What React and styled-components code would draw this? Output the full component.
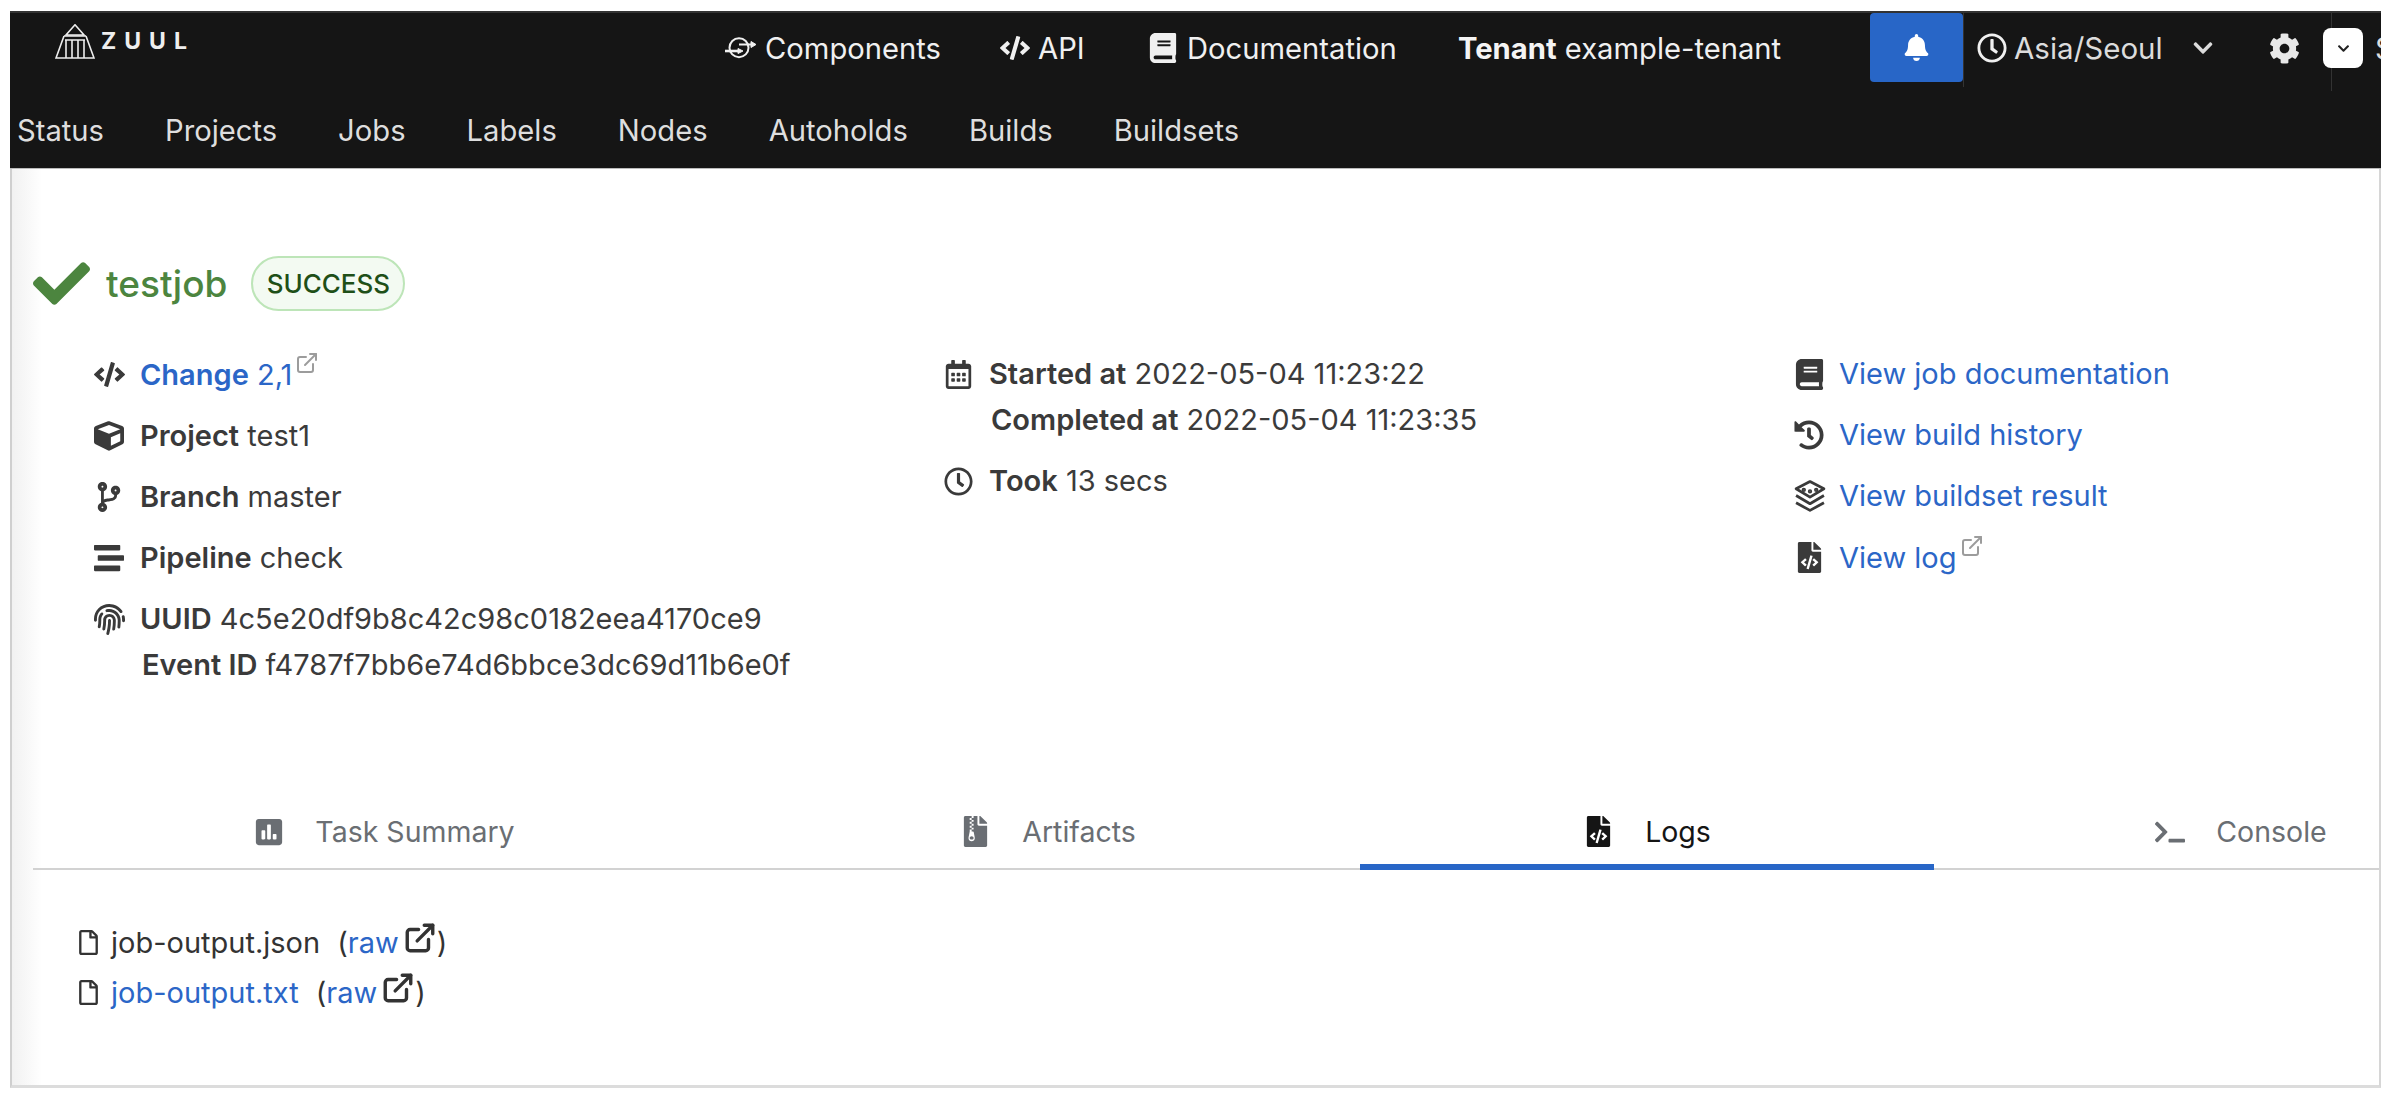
import React from "react";
import styled, { createGlobalStyle } from "styled-components";
import {
  FaBell, FaBook, FaCheck, FaChevronDown, FaCode, FaCodeBranch, FaCog, FaCube, FaFileArchive,
  FaFileCode, FaFingerprint, FaHistory, FaPoll, FaRegCalendarAlt, FaRegClock, FaRegFile, FaStream,
  FaTerminal,
} from "react-icons/fa";
import { ExternalLink } from "lucide-react";

const Global = createGlobalStyle`
  html, body { margin: 0; padding: 0; background: #fff; }
  body { font-family: Inter, "Open Sans", "Liberation Sans", sans-serif; color: #3b3b3b; overflow: hidden; }
  a { text-decoration: none; color: inherit; }
  * { box-sizing: border-box; }
`;

const Frame = styled.div`
  margin: 11px 13px 8px 10px;
  width: 2371px;
  height: 1077px;
  border-left: 2px solid #cfcfcf;
  border-right: 2px solid #d6d6d6;
  border-bottom: 3px solid #dcdcdc;
  background: linear-gradient(90deg, #f1f1f1 0, #fff 30px);
`;
const Header = styled.header`
  margin: 0 -2px;
  height: 158px;
  background: #151515;
  border-top: 2px solid #333;
  border-bottom: 1px solid #bbb;
  color: #f0f0f0;
  overflow: hidden;
  isolation: isolate;
`;
const TopRow = styled.div`
  height: 70px;
  display: flex;
  align-items: center;
  padding-left: 45px;
  white-space: nowrap;
`;
const Logo = styled.a`
  display: flex;
  align-items: flex-end;
  gap: 6px;
  width: 670px;
  height: 35px;
  margin-top: -13px;
  flex: none;
  color: #eee;
`;
const LogoText = styled.span`
  font-size: 23px;
  line-height: 34px;
  font-weight: 700;
  letter-spacing: 8px;
  height: 34px;
  margin-bottom: 1px;
`;
const TopLink = styled.a`
  display: flex;
  align-items: center;
  gap: ${(p) => p.$gap || 8}px;
  font-size: 29.2px;
  width: ${(p) => p.$w}px;
  flex: none;
  color: #f0f0f0;
  svg { flex: none; }
`;
const TenantText = styled.span`
  font-size: 29.2px;
  width: 412px;
  flex: none;
  color: #f0f0f0;
  b { font-weight: 700; color: #f4f4f4; }
`;
const BellButton = styled.button`
  width: 93px;
  height: 69px;
  flex: none;
  margin: -2px 14px 0 0;
  padding: 0;
  border: 0;
  border-radius: 4px;
  background: #2866c7;
  color: #fff;
  display: flex;
  align-items: center;
  justify-content: center;
  position: relative;
  &::after {
    content: "";
    position: absolute;
    left: 93px;
    top: -2px;
    width: 1px;
    height: 76px;
    background: #333;
  }
`;
const Zone = styled.span`
  display: flex;
  align-items: center;
  gap: 7px;
  width: 292px;
  flex: none;
  font-size: 29.5px;
  color: #dcdcdc;
  svg:first-child { color: #f0f0f0; }
`;
const ZoneChevron = styled(FaChevronDown)`
  margin-left: 22px;
`;
const Gear = styled(FaCog)`
  color: #e8e8e8;
  flex: none;
  margin-right: 23px;
`;
const UserBox = styled.span`
  position: relative;
  width: 40px;
  height: 40px;
  flex: none;
  border-radius: 8px;
  background: #fff;
  color: #222;
  display: flex;
  align-items: center;
  justify-content: center;
  &::after {
    content: "";
    position: absolute;
    left: 8px;
    top: -18px;
    width: 1px;
    height: 81px;
    background: #333;
    z-index: -1;
  }
`;
const UserName = styled.span`
  margin-left: 12px;
  font-size: 29.5px;
  color: #dcdcdc;
`;
const NavRow = styled.nav`
  height: 85px;
  padding: 10px 0 0 7px;
  display: flex;
  align-items: center;
  gap: 61px;
`;
const NavItem = styled.a`
  font-size: 29.2px;
  color: #dedede;
`;

const Title = styled.div`
  margin: 87px 0 40px 21px;
  height: 55px;
  display: flex;
  align-items: center;
  color: #4c853f;
`;
const TitleCheck = styled(FaCheck)`
  flex: none;
  margin-right: 16px;
`;
const TitleText = styled.span`
  font-size: 37px;
  font-weight: 500;
  margin-right: 24px;
`;
const Badge = styled.span`
  width: 154px;
  height: 55px;
  border-radius: 28px;
  border: 2px solid #bde5b8;
  background: #f3faf2;
  color: #1e4f18;
  font-size: 26px;
  font-weight: 500;
  display: flex;
  align-items: center;
  justify-content: center;
`;
const Details = styled.section`
  display: grid;
  grid-template-columns: 850px 850px 1fr;
  padding-left: 82px;
  height: 443px;
`;
const Column = styled.div`
  display: flex;
  flex-direction: column;
`;
const Row = styled.div`
  display: flex;
  align-items: flex-start;
  margin-bottom: 15px;
  font-size: 29px;
  line-height: 46px;
  white-space: nowrap;
`;
const RowIcon = styled.span`
  width: ${(p) => p.$w || 46}px;
  height: 46px;
  flex: none;
  display: flex;
  align-items: center;
  color: #3a3a3a;
`;
const Lines = styled.div`
  display: flex;
  flex-direction: column;
`;
const Indented = styled.span`
  margin-left: 2px;
`;
const Strong = styled.b`
  font-weight: 600;
  color: #3a3a3a;
`;
const Link = styled.a`
  color: #2b66c7;
`;
const LinkStrong = styled.b`
  font-weight: 600;
`;
const FaintIcon = styled(ExternalLink)`
  color: #9c9c9c;
  margin-left: 3px;
  vertical-align: 10px;
`;

const Tabs = styled.div`
  margin-left: 21px;
  height: 76px;
  display: flex;
  box-shadow: inset 0 -2px 0 0 #d2d2d2;
  margin-bottom: 47px;
  overflow: hidden;
`;
const Tab = styled.a`
  flex: none;
  height: 76px;
  width: ${(p) => p.$w}px;
  display: flex;
  align-items: center;
  justify-content: center;
  gap: 31px;
  font-size: 28.5px;
  padding-top: 5px;
  color: ${(p) => (p.$active ? "#151515" : "#6a6e73")};
  border-bottom: 6px solid ${(p) => (p.$active ? "#2866c7" : "transparent")};
`;
const Files = styled.ul`
  list-style: none;
  margin: 0;
  padding: 0 0 0 64px;
`;
const FileRow = styled.li`
  height: 50px;
  display: flex;
  align-items: center;
  font-size: 29px;
  color: #333;
  white-space: nowrap;
`;
const FileIcon = styled(FaRegFile)`
  margin-right: 10px;
  flex: none;
`;
const Raw = styled.span`
  display: inline-flex;
  align-items: center;
  margin-left: 17px;
`;
const RawIcon = styled(ExternalLink)`
  margin: -8px 0 0 4px;
  color: #333;
`;

const ComponentsIcon = ({ size }) => (
  <svg width={size} height={size} viewBox="0 0 32 32" fill="none" stroke="currentColor" strokeWidth="2">
    <circle cx="14" cy="15.7" r="9.5" />
    <path d="M14 12.5 H27" />
    <path d="M26 9.5 L31 12.5 L26 15.5 Z" fill="currentColor" strokeWidth="1" />
    <path d="M0 19 H13" strokeWidth="2.6" />
    <path d="M13 16.5 L18 19 L13 21.5 Z" fill="currentColor" strokeWidth="1" />
  </svg>
);
const TempleLogo = () => (
  <svg width="40" height="35" viewBox="0 0 40 35" fill="none" stroke="#eee" strokeWidth="1.6">
    <path d="M20 0.8 L29 11 H11 Z" />
    <path d="M9 12 H31 M10 16 H30" />
    <path d="M9 12 L1 34 H39 L31 12" />
    <path d="M11 16 V34 M17 16 V34 M23 16 V34 M29 16 V34" />
  </svg>
);
const LayersIcon = ({ size }) => (
  <svg width={size} height={size} viewBox="0 0 30 31" fill="none" stroke="currentColor" strokeWidth="2.6" strokeLinejoin="round">
    <path d="M15 1.5 L28.5 8.5 L15 16.5 L1.5 8.5 Z" />
    <path d="M1.5 15 L15 23 L28.5 15" />
    <path d="M1.5 22 L15 29.5 L28.5 22" />
    <circle cx="9" cy="9.5" r="0.8" fill="currentColor" />
    <circle cx="15" cy="11" r="0.8" fill="currentColor" />
    <circle cx="21" cy="9.5" r="0.8" fill="currentColor" />
  </svg>
);

const navItems = ["Status", "Projects", "Jobs", "Labels", "Nodes", "Autoholds", "Builds", "Buildsets"];

const Topbar = () => (
  <Header>
    <TopRow>
      <Logo>
        <TempleLogo />
        <LogoText>ZUUL</LogoText>
      </Logo>
      <TopLink $w={275}><ComponentsIcon size={32} />Components</TopLink>
      <TopLink $w={148}><FaCode size={30} />API</TopLink>
      <TopLink $w={310} $gap={9}><FaBook size={30} />Documentation</TopLink>
      <TenantText><b>Tenant</b> example-tenant</TenantText>
      <BellButton aria-label="Notifications"><FaBell size={27} /></BellButton>
      <Zone><FaRegClock size={30} />Asia/Seoul<ZoneChevron size={22} /></Zone>
      <Gear size={31} />
      <UserBox><FaChevronDown size={13} /></UserBox>
      <UserName>S</UserName>
    </TopRow>
    <NavRow>
      {navItems.map((n) => <NavItem key={n}>{n}</NavItem>)}
    </NavRow>
  </Header>
);

export default function App() {
  return (
    <>
      <Global />
      <Frame>
        <Topbar />
        <Title>
          <TitleCheck size={57} />
          <TitleText>testjob</TitleText>
          <Badge>SUCCESS</Badge>
        </Title>
        <Details>
          <Column>
            <Row>
              <RowIcon><FaCode size={31} /></RowIcon>
              <span><Link><LinkStrong>Change</LinkStrong> 2,1</Link><FaintIcon size={24} /></span>
            </Row>
            <Row><RowIcon><FaCube size={30} /></RowIcon><span><Strong>Project</Strong> test1</span></Row>
            <Row><RowIcon><FaCodeBranch size={30} /></RowIcon><span><Strong>Branch</Strong> master</span></Row>
            <Row><RowIcon><FaStream size={30} /></RowIcon><span><Strong>Pipeline</Strong> check</span></Row>
            <Row>
              <RowIcon><FaFingerprint size={31} /></RowIcon>
              <Lines>
                <span><Strong>UUID</Strong> 4c5e20df9b8c42c98c0182eea4170ce9</span>
                <Indented><Strong>Event ID</Strong> f4787f7bb6e74d6bbce3dc69d11b6e0f</Indented>
              </Lines>
            </Row>
          </Column>
          <Column>
            <Row>
              <RowIcon $w={45}><FaRegCalendarAlt size={29} /></RowIcon>
              <Lines>
                <span><Strong>Started at</Strong> 2022-05-04 11:23:22</span>
                <Indented><Strong>Completed at</Strong> 2022-05-04 11:23:35</Indented>
              </Lines>
            </Row>
            <Row><RowIcon $w={45}><FaRegClock size={29} /></RowIcon><span><Strong>Took</Strong> 13 secs</span></Row>
          </Column>
          <Column>
            <Row><RowIcon $w={45}><FaBook size={31} /></RowIcon><Link>View job documentation</Link></Row>
            <Row><RowIcon $w={45}><FaHistory size={30} /></RowIcon><Link>View build history</Link></Row>
            <Row><RowIcon $w={45}><LayersIcon size={32} /></RowIcon><Link>View buildset result</Link></Row>
            <Row><RowIcon $w={45}><FaFileCode size={31} /></RowIcon><span><Link>View log</Link><FaintIcon size={24} /></span></Row>
          </Column>
        </Details>
        <Tabs>
          <Tab $w={703}><FaPoll size={30} />Task Summary</Tab>
          <Tab $w={624}><FaFileArchive size={31} />Artifacts</Tab>
          <Tab $w={574} $active><FaFileCode size={31} />Logs</Tab>
          <Tab $w={614}><FaTerminal size={30} />Console</Tab>
        </Tabs>
        <Files>
          <FileRow>
            <FileIcon size={25} />job-output.json
            <Raw>(<Link>raw</Link><RawIcon size={34} strokeWidth={2.4} />)</Raw>
          </FileRow>
          <FileRow>
            <FileIcon size={25} /><Link>job-output.txt</Link>
            <Raw>(<Link>raw</Link><RawIcon size={34} strokeWidth={2.4} />)</Raw>
          </FileRow>
        </Files>
      </Frame>
    </>
  );
}
